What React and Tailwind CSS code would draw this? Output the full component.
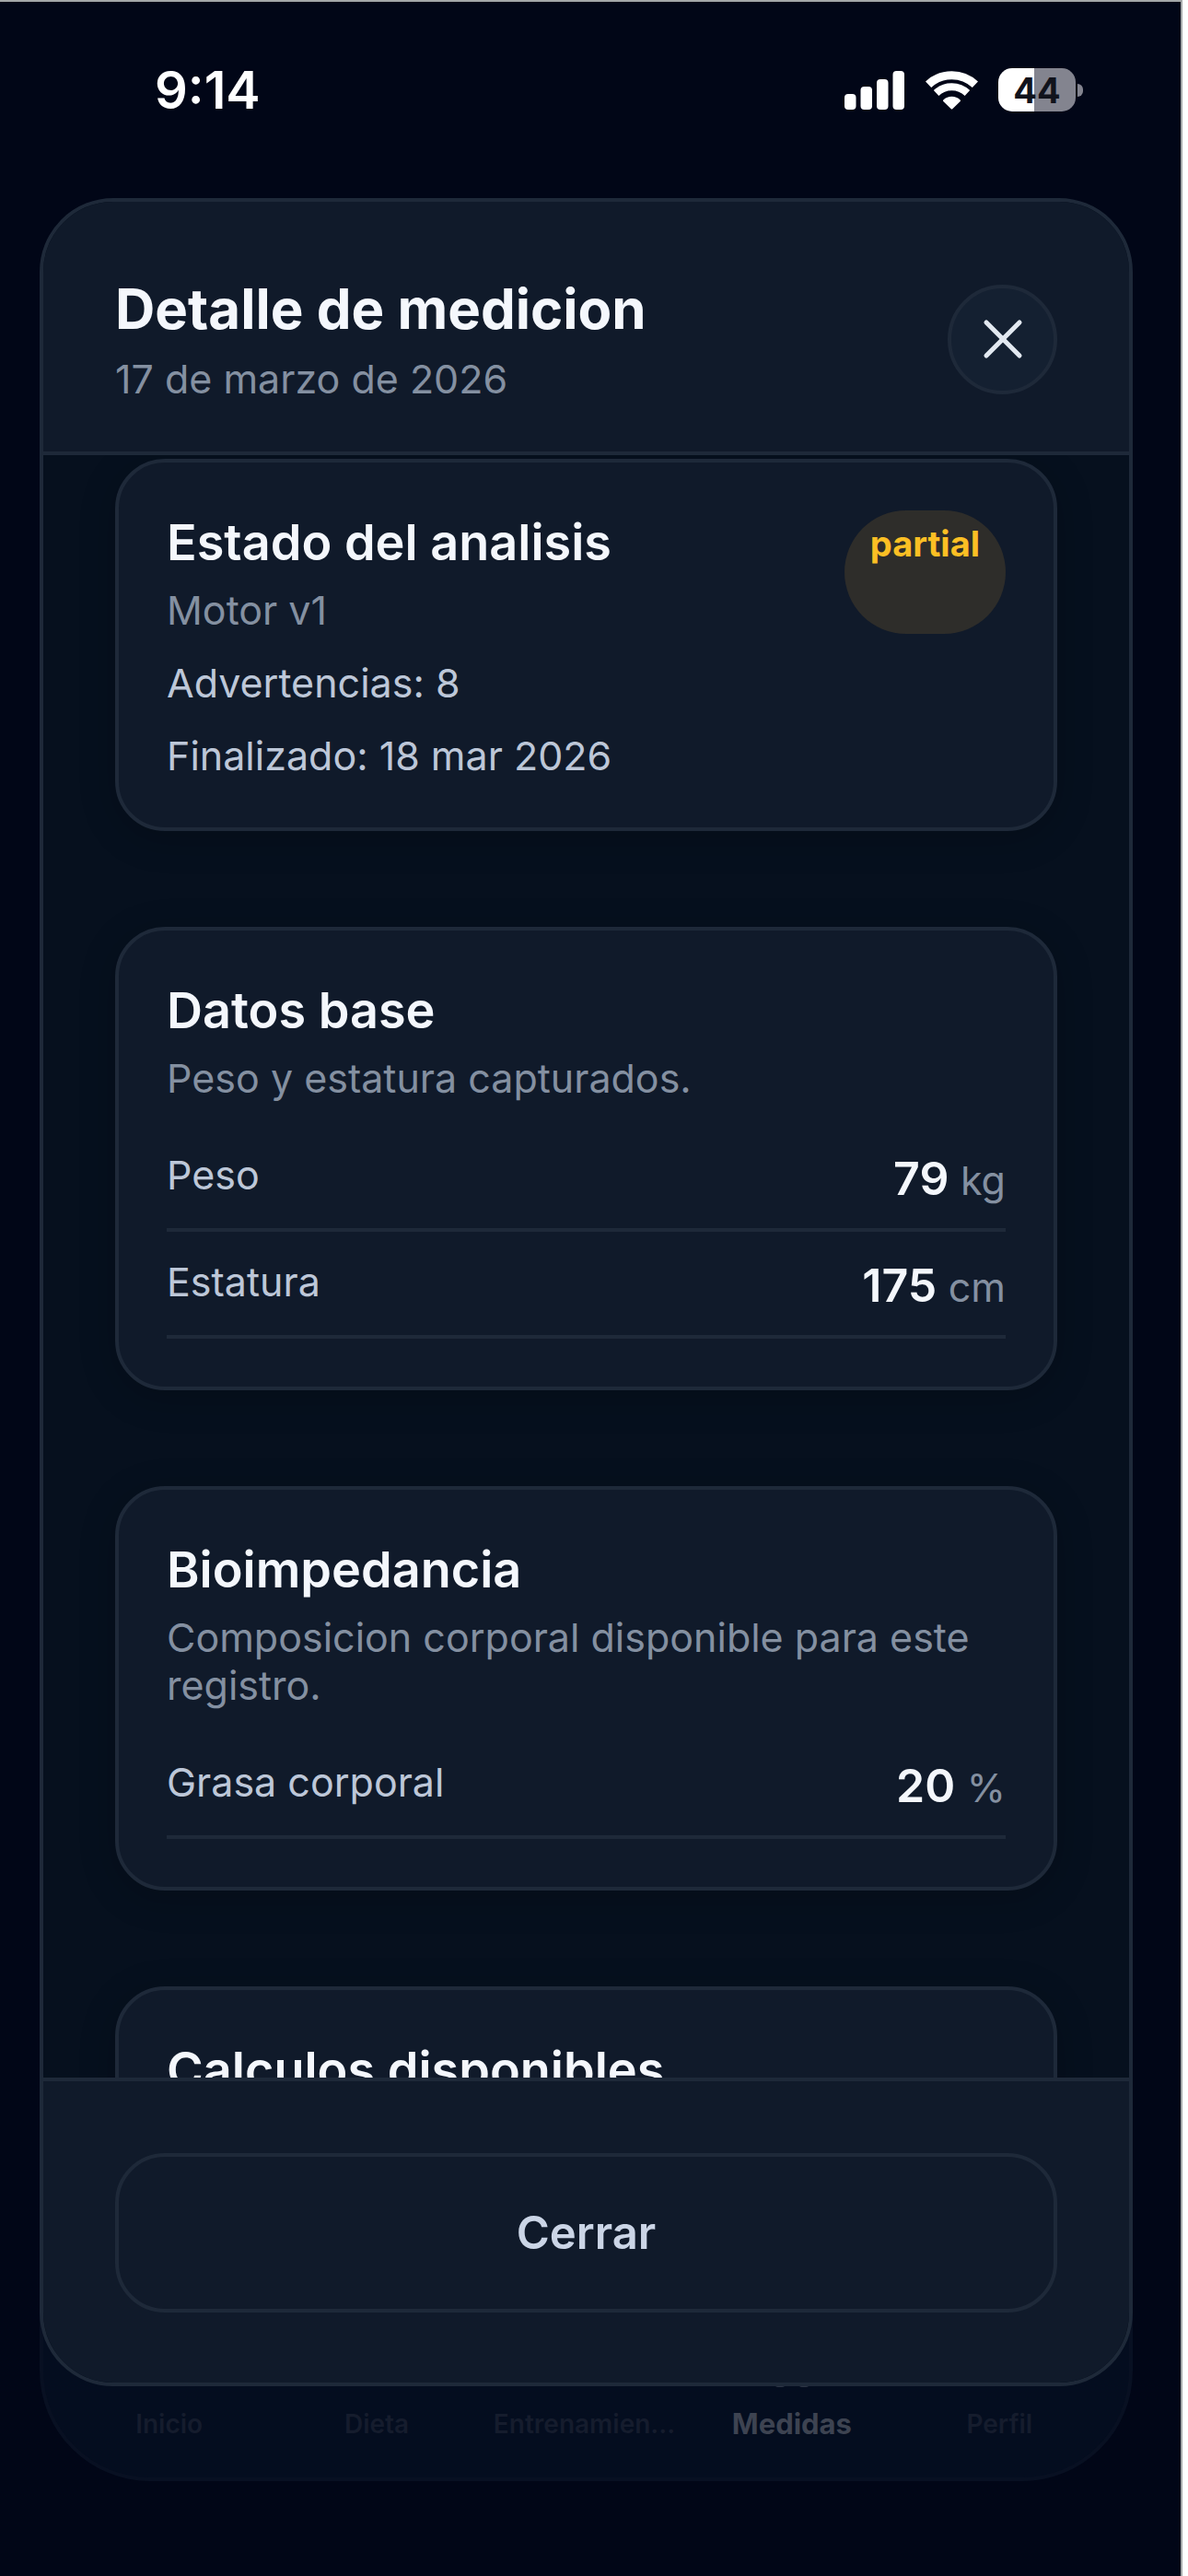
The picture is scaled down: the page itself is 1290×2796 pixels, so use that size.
import { X } from "lucide-react";

function SignalIcon() {
  return (
    <svg width="66" height="42" viewBox="0 0 66 42" fill="white" aria-hidden="true">
      <rect x="0" y="25" width="12.5" height="17" rx="4" />
      <rect x="17.5" y="17" width="12.5" height="25" rx="4" />
      <rect x="35" y="9" width="12.5" height="33" rx="4" />
      <rect x="52.5" y="0" width="12.5" height="42" rx="4" />
    </svg>
  );
}

function WifiIcon() {
  return (
    <svg width="57" height="42" viewBox="0 0 57 42" fill="none" aria-hidden="true">
      <path d="M3.1 14.8A37 37 0 0 1 53.9 14.8" stroke="white" strokeWidth="9" />
      <path d="M11.6 24A24.5 24.5 0 0 1 45.4 24" stroke="white" strokeWidth="8" />
      <path
        d="M28.5 40.5L20 32.2A12.5 12.5 0 0 1 37 32.2Z"
        fill="white"
        stroke="white"
        strokeWidth="2"
        strokeLinejoin="round"
      />
    </svg>
  );
}

function Battery({ level }) {
  return (
    <div className="flex items-center gap-0.5" aria-label={`Batería ${level}%`}>
      <div className="flex h-[47px] w-[84px] items-center justify-center rounded-[15px] bg-[linear-gradient(to_right,#ffffff_46%,#83848f_46%)] text-[38px] leading-none font-bold text-[#11131c]">
        {level}
      </div>
      <div className="h-3.5 w-1.5 rounded-r-full bg-[#83848f]" />
    </div>
  );
}

function StatusBar() {
  return (
    <header className="flex h-[213px] shrink-0 items-center justify-between pr-[106px] pb-[22px] pl-[168px] text-white">
      <time className="text-[56px] leading-none font-semibold">9:14</time>
      <div className="flex items-center gap-[22px]">
        <SignalIcon />
        <WifiIcon />
        <Battery level={44} />
      </div>
    </header>
  );
}

function Card({ children }) {
  return (
    <section className="rounded-[54px] border-4 border-[#1e2939] bg-[#101a2a] p-[52px] shadow-[0_8px_40px_rgba(0,0,0,0.2)]">
      {children}
    </section>
  );
}

function CardHeading({ title, subtitle }) {
  return (
    <div>
      <h2 className="text-[54px] leading-[70px] font-semibold text-[#f4f7fc]">{title}</h2>
      {subtitle && (
        <p className="mt-3 text-[43px] leading-[52px] text-[#8490a1]">{subtitle}</p>
      )}
    </div>
  );
}

function Rows({ rows }) {
  return (
    <dl className="mt-[25px]">
      {rows.map(({ label, value, unit }) => (
        <div
          key={label}
          className="flex items-start justify-between border-b-4 border-[#1e2939] pt-7 pb-6"
        >
          <dt className="text-[43px] leading-[52px] text-[#bdc7d8]">{label}</dt>
          <dd className="text-[50px] leading-[60px] font-semibold text-[#f4f7fc]">
            {value} <span className="text-[43px] leading-none font-normal text-[#8490a1]">{unit}</span>
          </dd>
        </div>
      ))}
    </dl>
  );
}

function DetailDialog() {
  return (
    <main
      role="dialog"
      aria-labelledby="dialog-title"
      className="relative z-10 mr-[52px] ml-[43px] flex min-h-0 flex-1 flex-col overflow-hidden rounded-[80px] border-4 border-[#1e2939] bg-[#06101e]"
    >
      <header className="flex shrink-0 items-center justify-between border-b-4 border-[#1e2939] bg-[#101a2a] px-[78px] pt-20 pb-[53px]">
        <div>
          <h1 id="dialog-title" className="text-[60px] leading-[72px] font-bold text-[#f4f7fc]">
            Detalle de medicion
          </h1>
          <p className="mt-3.5 text-[43px] leading-[52px] text-[#8490a1]">17 de marzo de 2026</p>
        </div>
        <button
          type="button"
          aria-label="Cerrar detalle"
          className="flex size-[119px] items-center justify-center rounded-full border-4 border-[#1e2939] bg-[#142031] text-[#e2e8f0]"
        >
          <X size={72} strokeWidth={1.7} />
        </button>
      </header>

      <div className="flex min-h-0 flex-1 flex-col gap-[104px] overflow-y-auto px-[78px] pt-1 [scrollbar-width:none] *:shrink-0">
        <Card>
          <div className="flex justify-between">
            <CardHeading title="Estado del analisis" subtitle="Motor v1" />
            <span className="rounded-full bg-[#2e2d2a] px-7 pt-3 text-[38px] leading-[48px] font-bold text-[#fbbf24]">
              partial
            </span>
          </div>
          <p className="mt-[27px] text-[43px] leading-[52px] text-[#bdc7d8]">Advertencias: 8</p>
          <p className="mt-[27px] text-[43px] leading-[52px] text-[#bdc7d8]">
            Finalizado: 18 mar 2026
          </p>
        </Card>
        <Card>
          <CardHeading title="Datos base" subtitle="Peso y estatura capturados." />
          <Rows
            rows={[
              { label: "Peso", value: "79", unit: "kg" },
              { label: "Estatura", value: "175", unit: "cm" },
            ]}
          />
        </Card>
        <Card>
          <CardHeading
            title="Bioimpedancia"
            subtitle="Composicion corporal disponible para este registro."
          />
          <Rows rows={[{ label: "Grasa corporal", value: "20", unit: "%" }]} />
        </Card>
        <Card>
          <CardHeading title="Calculos disponibles" />
        </Card>
      </div>

      <footer className="shrink-0 border-t-4 border-[#1e2939] bg-[#101a2a] px-[78px] pt-[78px] pb-[76px]">
        <button
          type="button"
          className="h-[173px] w-full rounded-[54px] border-4 border-[#1e2939] text-[49px] font-semibold text-[#cbd5e6]"
        >
          Cerrar
        </button>
      </footer>
    </main>
  );
}

function TabBar() {
  return (
    <nav className="-mt-[180px] mr-[52px] mb-[103px] ml-[43px] grid h-[283px] shrink-0 grid-cols-5 items-end rounded-b-[120px] border-4 border-t-0 border-[#081022] bg-[#040d1f] pr-7 pb-10 pl-6 text-center text-[28px] leading-9 font-semibold text-[#151c2d]">
      <a href="#inicio">Inicio</a>
      <a href="#dieta">Dieta</a>
      <a href="#entrenamiento">Entrenamien...</a>
      <a
        href="#medidas"
        aria-current="page"
        className="flex flex-col items-center gap-[22px] text-[31px] font-bold text-[#3d4351]"
      >
        <svg width="40" height="10" viewBox="0 0 40 10" fill="#2c3444" aria-hidden="true">
          <rect x="1" y="0" width="12" height="10" rx="4" />
          <rect x="27" y="0" width="12" height="10" rx="4" />
        </svg>
        Medidas
      </a>
      <a href="#perfil">Perfil</a>
    </nav>
  );
}

export default function App() {
  return (
    <div className="h-screen bg-white pr-1.5 font-[Inter,sans-serif]">
      <div className="flex h-full flex-col border-t-2 border-r-2 border-[#a3a7a8] bg-[#010617]">
        <StatusBar />
        <DetailDialog />
        <TabBar />
      </div>
    </div>
  );
}
